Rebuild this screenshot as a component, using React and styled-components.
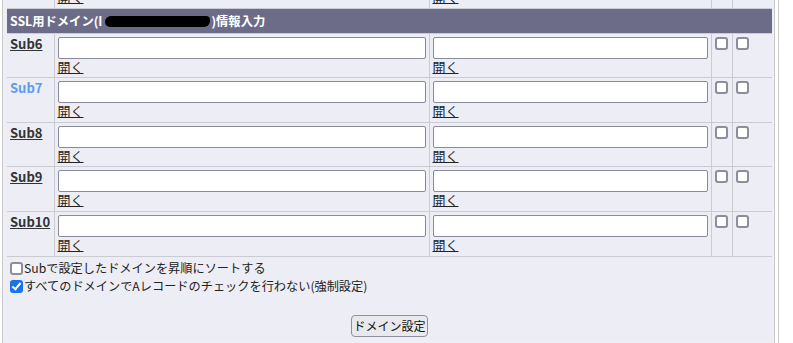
import React from 'react'
import styled, { createGlobalStyle } from 'styled-components'

const GlobalStyle = createGlobalStyle`
    html, body {
        margin: 0;
        padding: 0;
        background: #FFFFFF;
        overflow: hidden;
    }
    body {
        font-family: "Noto Sans CJK JP", "Liberation Sans", sans-serif;
        font-size: 13px;
        color: #222222;
    }
`

const Shell = styled.div`
    margin: -36px 0 0 2px;
    width: 772px;
    border-left: 1px solid #CACACA;
    border-right: 1px solid #CACACA;
    padding-right: 3px;
`

const Frame = styled.div`
    background: #EEEEF5;
    padding: 0 3px 0 4px;
    border-right: 1px solid #CACACA;
`

const Table = styled.table`
    width: 765px;
    table-layout: fixed;
    border-collapse: collapse;
    border-style: hidden;
    background: #ECEDF5;

    td {
        border: 1px solid #CBCBD2;
        vertical-align: top;
        padding: 3px;
        line-height: 15.6px;
    }
`

const HeadCell = styled.td`
    && {
        background: #6C6C88;
        color: #FFFFFF;
        font-weight: 700;
        font-size: 12.3px;
        height: 18px;
        line-height: 18px;
        padding: 3px;
        white-space: nowrap;
    }
`

const Redacted = styled.span`
    display: inline-block;
    width: 105px;
    height: 11px;
    margin: 0 1px 0 3px;
    vertical-align: -1px;
    background: #000000;
    border-radius: 6px 4px 6px 5px;
`

const SubLink = styled.a`
    display: block;
    font-weight: 700;
    line-height: 14px;
    color: ${p => (p.$hover ? '#5E9BEF' : '#333333')};
    text-decoration: ${p => (p.$hover ? 'none' : 'underline')};
    cursor: pointer;
`

const TextInput = styled.input`
    display: block;
    box-sizing: border-box;
    width: 100%;
    height: 22px;
    margin: 0;
    border: 1px solid #8A8A98;
    border-radius: 2px;
    background: #FFFFFF;
`

const OpenLink = styled.a`
    display: inline-block;
    line-height: 15.6px;
    color: #222222;
    text-decoration: underline;
    cursor: pointer;
`

const Check = styled.input.attrs({ type: 'checkbox' })`
    appearance: none;
    position: relative;
    box-sizing: border-box;
    display: block;
    flex: none;
    width: 13px;
    height: 13px;
    margin: 0;
    border: 2px solid #8E8E9B;
    border-radius: 3px;
    background: #FFFFFF;

    &:checked {
        border: none;
        background: #1A73E8;
    }
    &:checked::after {
        content: '';
        position: absolute;
        left: 4px;
        top: 1px;
        width: 3px;
        height: 7px;
        border: solid #FFFFFF;
        border-width: 0 2px 2px 0;
        transform: rotate(40deg);
    }
`

const OptionLabel = styled.label`
    display: flex;
    align-items: center;
    gap: 1px;
    height: 18px;
    white-space: nowrap;
    font-size: 12.2px;
`

const Footer = styled.td`
    && {
        padding: 3px;
    }
`

const ButtonRow = styled.div`
    display: flex;
    justify-content: center;
    margin-top: 19px;
`

const SetButton = styled.button`
    font-family: inherit;
    font-size: 12px;
    line-height: 18px;
    height: 22px;
    padding: 0 1px;
    color: #111111;
    background: #E9E9ED;
    border: 1px solid #8F8F9D;
    border-radius: 4px;
`

const subs = [
    { name: 'Sub6' },
    { name: 'Sub7', hover: true },
    { name: 'Sub8' },
    { name: 'Sub9' },
    { name: 'Sub10' }
]

const DomainRow = ({ name, hover, bare }) => (
    <tr>
        <td>{!bare && <SubLink $hover={hover}>{name}</SubLink>}</td>
        <td>
            <TextInput type="text" />
            <OpenLink>開く</OpenLink>
        </td>
        <td>
            <TextInput type="text" />
            <OpenLink>開く</OpenLink>
        </td>
        <td><Check /></td>
        <td><Check /></td>
    </tr>
)

const App = () => {
    return (
        <>
            <GlobalStyle />
            <Shell>
                <Frame>
                    <Table>
                        <colgroup>
                            <col style={{ width: 47 }} />
                            <col style={{ width: 375 }} />
                            <col style={{ width: 282 }} />
                            <col style={{ width: 21 }} />
                            <col style={{ width: 40 }} />
                        </colgroup>
                        <tbody>
                            <DomainRow name="Sub5" bare />
                            <tr>
                                <HeadCell colSpan={5}>
                                    SSL用ドメイン(I<Redacted />)情報入力
                                </HeadCell>
                            </tr>
                            {subs.map(s => (
                                <DomainRow key={s.name} name={s.name} hover={s.hover} />
                            ))}
                            <tr>
                                <Footer colSpan={5}>
                                    <OptionLabel>
                                        <Check />
                                        Subで設定したドメインを昇順にソートする
                                    </OptionLabel>
                                    <OptionLabel>
                                        <Check defaultChecked />
                                        すべてのドメインでAレコードのチェックを行わない(強制設定)
                                    </OptionLabel>
                                    <ButtonRow>
                                        <SetButton>ドメイン設定</SetButton>
                                    </ButtonRow>
                                </Footer>
                            </tr>
                        </tbody>
                    </Table>
                    <div style={{ height: 20 }} />
                </Frame>
            </Shell>
        </>
    )
}

export default App
